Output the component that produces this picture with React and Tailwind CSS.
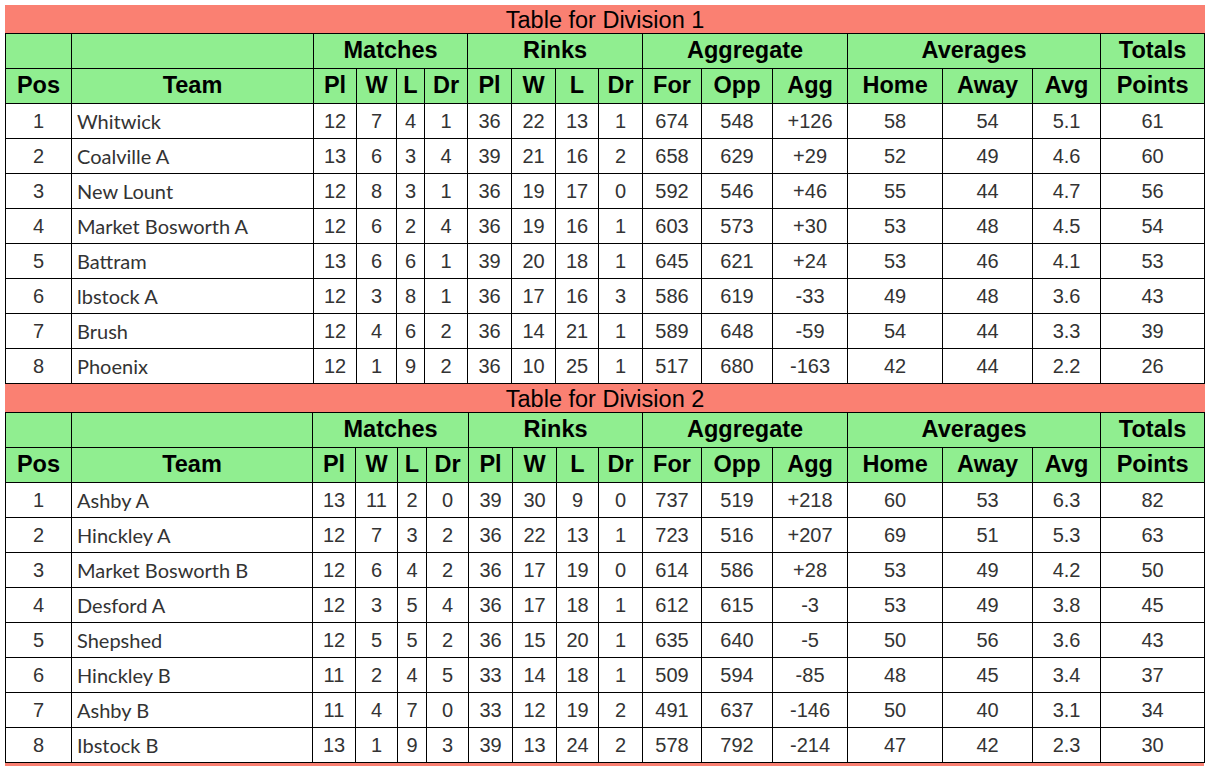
const div1 = [
  [1, "Whitwick", 12, 7, 4, 1, 36, 22, 13, 1, 674, 548, "+126", 58, 54, "5.1", 61],
  [2, "Coalville A", 13, 6, 3, 4, 39, 21, 16, 2, 658, 629, "+29", 52, 49, "4.6", 60],
  [3, "New Lount", 12, 8, 3, 1, 36, 19, 17, 0, 592, 546, "+46", 55, 44, "4.7", 56],
  [4, "Market Bosworth A", 12, 6, 2, 4, 36, 19, 16, 1, 603, 573, "+30", 53, 48, "4.5", 54],
  [5, "Battram", 13, 6, 6, 1, 39, 20, 18, 1, 645, 621, "+24", 53, 46, "4.1", 53],
  [6, "lbstock A", 12, 3, 8, 1, 36, 17, 16, 3, 586, 619, "-33", 49, 48, "3.6", 43],
  [7, "Brush", 12, 4, 6, 2, 36, 14, 21, 1, 589, 648, "-59", 54, 44, "3.3", 39],
  [8, "Phoenix", 12, 1, 9, 2, 36, 10, 25, 1, 517, 680, "-163", 42, 44, "2.2", 26],
];

const div2 = [
  [1, "Ashby A", 13, 11, 2, 0, 39, 30, 9, 0, 737, 519, "+218", 60, 53, "6.3", 82],
  [2, "Hinckley A", 12, 7, 3, 2, 36, 22, 13, 1, 723, 516, "+207", 69, 51, "5.3", 63],
  [3, "Market Bosworth B", 12, 6, 4, 2, 36, 17, 19, 0, 614, 586, "+28", 53, 49, "4.2", 50],
  [4, "Desford A", 12, 3, 5, 4, 36, 17, 18, 1, 612, 615, "-3", 53, 49, "3.8", 45],
  [5, "Shepshed", 12, 5, 5, 2, 36, 15, 20, 1, 635, 640, "-5", 50, 56, "3.6", 43],
  [6, "Hinckley B", 11, 2, 4, 5, 33, 14, 18, 1, 509, 594, "-85", 48, 45, "3.4", 37],
  [7, "Ashby B", 11, 4, 7, 0, 33, 12, 19, 2, 491, 637, "-146", 50, 40, "3.1", 34],
  [8, "Ibstock B", 13, 1, 9, 3, 39, 13, 24, 2, 578, 792, "-214", 47, 42, "2.3", 30],
];

const widths1 = [66, 242, 43, 40, 28, 43, 44, 44, 43, 44, 59, 71, 75, 95, 90, 68, 104];
const widths2 = [66, 241, 43, 42, 29, 42, 44, 44, 42, 44, 59, 71, 75, 95, 90, 68, 104];

const subHeads = ["Pos", "Team", "Pl", "W", "L", "Dr", "Pl", "W", "L", "Dr", "For", "Opp", "Agg", "Home", "Away", "Avg", "Points"];

const th = "border border-black bg-[#90ee90] text-black font-bold text-[23.5px] text-center leading-none h-[35px] p-0";
const td = "border border-black text-[20px] text-[#333] text-center h-[35px] p-0 leading-none";

function DivisionTable({ title, rows, widths }) {
  return (
    <table className="table-fixed border-collapse w-[1199px]" style={{ fontFamily: '"Liberation Sans", Arial, sans-serif' }}>
      <caption className="bg-[#fa8072] text-black text-[23.5px] h-[28px] leading-[30px] text-center">{title}</caption>
      <colgroup>
        {widths.map((w, i) => (
          <col key={i} style={{ width: w }} />
        ))}
      </colgroup>
      <thead>
        <tr>
          <th className={th}></th>
          <th className={th}></th>
          <th className={th} colSpan={4}>Matches</th>
          <th className={th} colSpan={4}>Rinks</th>
          <th className={th} colSpan={3}>Aggregate</th>
          <th className={th} colSpan={3}>Averages</th>
          <th className={th}>Totals</th>
        </tr>
        <tr>
          {subHeads.map((h, i) => (
            <th key={i} className={th}>{h}</th>
          ))}
        </tr>
      </thead>
      <tbody>
        {rows.map((r) => (
          <tr key={r[0]} className="bg-white">
            {r.map((v, i) =>
              i === 1 ? (
                <td key={i} className={`${td} text-left pl-[5px] text-[20.5px] text-[#2b2b2b]`} style={{ fontFamily: "Lato, 'Open Sans', sans-serif" }}>
                  {v}
                </td>
              ) : (
                <td key={i} className={td}>{v}</td>
              )
            )}
          </tr>
        ))}
      </tbody>
    </table>
  );
}

export default function App() {
  return (
    <div className="bg-white min-h-screen pt-[5px] pl-[5px] overflow-hidden h-[766px]">
      <DivisionTable title="Table for Division 1" rows={div1} widths={widths1} />
      <DivisionTable title="Table for Division 2" rows={div2} widths={widths2} />
      <div className="bg-[#fa8072] h-[28px] w-[1199px]"></div>
    </div>
  );
}
